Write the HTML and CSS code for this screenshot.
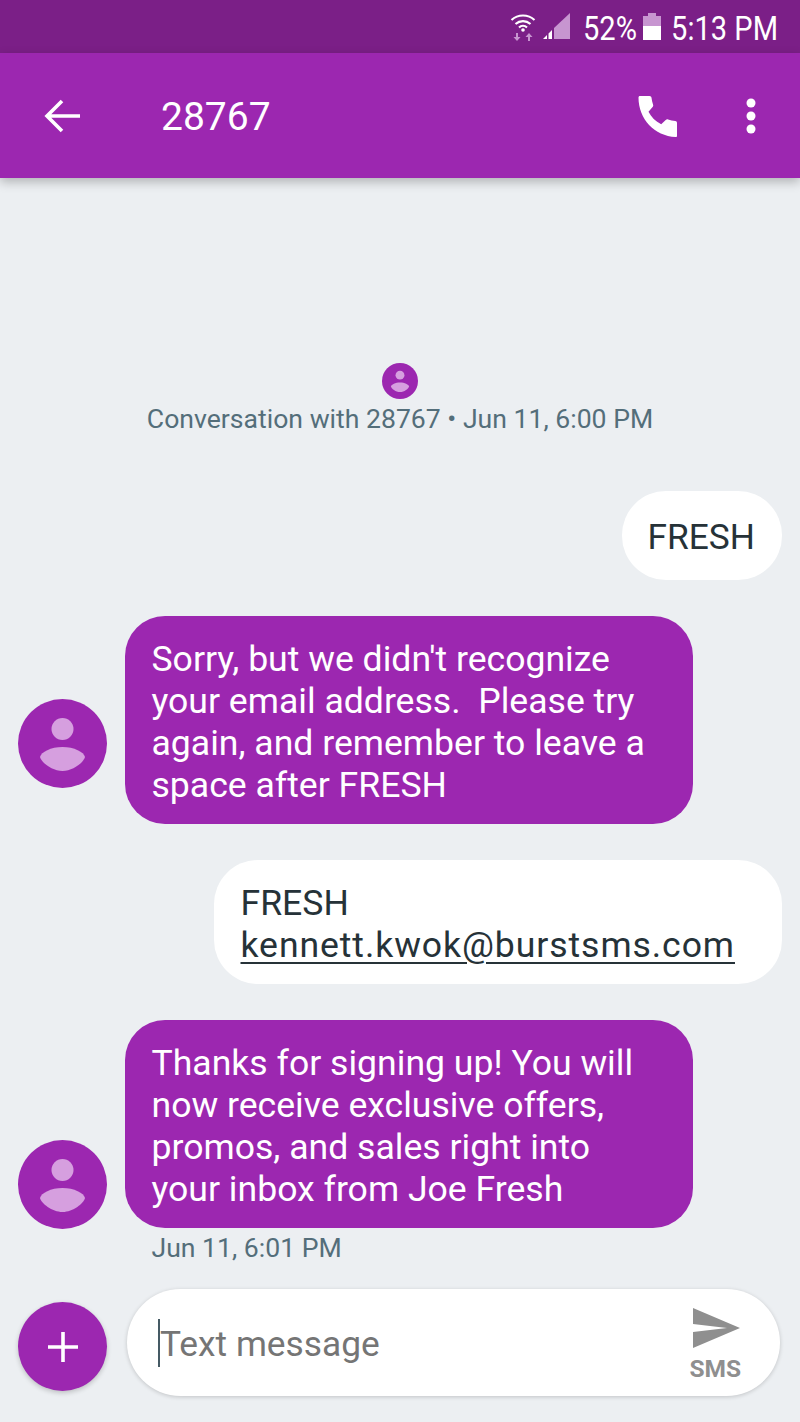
FILE: index.html
```html
<!DOCTYPE html>
<html lang="en">
<head>
    <meta charset="UTF-8">
    <meta name="viewport" content="width=device-width, initial-scale=1.0">
    <title>28767</title>
    <link rel="stylesheet" href="styles.css">
</head>
<body>

    <!-- Status bar -->
    <div class="status-bar">
        <svg class="wifi-icon" width="26" height="28" viewBox="0 0 26 28">
            <path d="M1.5 7 A17 17 0 0 1 24.5 7" fill="none" stroke="#fff" stroke-width="2.2"/>
            <path d="M5.5 11 A11.500 11.500 0 0 1 20.500 11" fill="none" stroke="#fff" stroke-width="2.2"/>
            <path d="M9 14.500 A6 6 0 0 1 17 14.500" fill="none" stroke="#fff" stroke-width="2.200"/>
            <circle cx="13" cy="17" r="1.800" fill="#fff"/>
            <path d="M8 20v4h2.500l-3.500 4-3.500-4H6v-4zM18 28v-4h-2.500l3.500-4 3.500 4H20v4z" fill="#c795d0"/>
        </svg>
        <svg class="signal-icon" width="28" height="28" viewBox="0 0 28 28">
            <path d="M27 0v26H11V15z" fill="#c795d0"/>
            <path d="M0 26l4-4v4zM5.500 20.500L9 17v9H5.500z" fill="#fff"/>
        </svg>
        <span class="status-text battery-text">52%</span>
        <svg class="battery-icon" width="18" height="27" viewBox="0 0 18 27">
            <path d="M5 0h8v3h5v12H0V3h5z" fill="#c795d0"/>
            <path d="M0 13h18v14H0z" fill="#fff"/>
        </svg>
        <span class="status-text clock">5:13 PM</span>
    </div>

    <!-- App bar -->
    <header class="app-bar">
        <svg class="back-icon" width="38" height="34" viewBox="0 0 38 34">
            <path d="M19 2L4 17l15 15M4 17h33" fill="none" stroke="#fff" stroke-width="3.600"/>
        </svg>
        <h1 class="title">28767</h1>
        <svg class="call-icon" width="42" height="42" viewBox="0 0 42 42">
            <path d="M3 1h9.500c1.200 0 1.800.8 2 1.800.3 2.500.8 4.800 1.600 7 .3.900.1 1.700-.5 2.300l-4.100 4.600c2.800 5.400 6.900 9.500 12.700 12.500l4.500-4.300c.7-.6 1.500-.8 2.400-.5 2.200.8 4.700 1.300 7.200 1.500 1 .1 1.700.8 1.700 2V41c0 .6-.5 1-1.200 1C17.500 41 1.500 24 1.500 2.500 1.500 1.600 2 1 3 1z" fill="#fff"/>
        </svg>
        <svg class="menu-icon" width="10" height="36" viewBox="0 0 10 36">
            <circle cx="5" cy="5" r="4.500" fill="#fff"/>
            <circle cx="5" cy="18" r="4.500" fill="#fff"/>
            <circle cx="5" cy="31" r="4.500" fill="#fff"/>
        </svg>
    </header>

    <main class="conversation">

        <!-- Conversation start -->
        <div class="convo-start">
            <svg class="avatar-small" width="36" height="36" viewBox="0 0 89 89">
                <circle cx="44.500" cy="44.500" r="44.500" fill="#9c27b0"/>
                <circle cx="44.500" cy="30" r="11" fill="#d69fdf"/>
                <path d="M22 58C23 53 33 48 44.500 48S66 53 67 58C66 63 55 72 44.500 72S23 63 22 58z" fill="#d69fdf"/>
            </svg>
            <p class="convo-label">Conversation with 28767 • Jun 11, 6:00 PM</p>
        </div>

        <div class="row row-out">
            <div class="bubble bubble-out bubble-single">FRESH</div>
        </div>

        <div class="row row-in">
            <svg class="avatar avatar-first" width="89" height="89" viewBox="0 0 89 89">
                <circle cx="44.500" cy="44.500" r="44.500" fill="#9c27b0"/>
                <circle cx="44.500" cy="30" r="11" fill="#d69fdf"/>
                <path d="M22 58C23 53 33 48 44.500 48S66 53 67 58C66 63 55 72 44.500 72S23 63 22 58z" fill="#d69fdf"/>
            </svg>
            <div class="message-col">
                <div class="bubble bubble-in">Sorry, but we didn't recognize your email address.&nbsp; Please try again, and remember to leave a space after FRESH</div>
            </div>
        </div>

        <div class="row row-out">
            <div class="bubble bubble-out bubble-wide">FRESH<br><span class="email">kennett.kwok@burstsms.com</span></div>
        </div>

        <div class="row row-in">
            <svg class="avatar avatar-last" width="89" height="89" viewBox="0 0 89 89">
                <circle cx="44.500" cy="44.500" r="44.500" fill="#9c27b0"/>
                <circle cx="44.500" cy="30" r="11" fill="#d69fdf"/>
                <path d="M22 58C23 53 33 48 44.500 48S66 53 67 58C66 63 55 72 44.500 72S23 63 22 58z" fill="#d69fdf"/>
            </svg>
            <div class="message-col">
                <div class="bubble bubble-in">Thanks for signing up! You will now receive exclusive offers, promos, and sales right into your inbox from Joe Fresh</div>
                <div class="timestamp">Jun 11, 6:01 PM</div>
            </div>
        </div>
    </main>

    <!-- Compose bar -->
    <footer class="composer">
        <button class="add-btn" type="button">
            <svg width="32" height="32" viewBox="0 0 32 32">
                <path d="M16 1v30M1 16h30" fill="none" stroke="#fff" stroke-width="3.600"/>
            </svg>
        </button>
        <div class="input-box">
            <span class="caret"></span>
            <span class="placeholder">Text message</span>
            <div class="send">
                <svg class="send-icon" width="48" height="40" viewBox="0 0 48 40">
                    <path d="M1 0l47 20L1 40V24l34-4L1 16z" fill="#8f8f8f"/>
                </svg>
                <span class="send-label">SMS</span>
            </div>
        </div>
    </footer>

</body>
</html>
```

FILE: styles.css
```css
body {
    margin: 0;
    width: 800px;
    height: 1422px;
    overflow: hidden;
    background-color: #eceff2;
    font-family: 'Roboto', sans-serif;
    display: flex;
    flex-direction: column;
}

/* Status bar */
.status-bar {
    flex: none;
    height: 53px;
    background-color: #7b1f87;
    display: flex;
    align-items: center;
    justify-content: flex-end;
    padding-right: 22px;
    box-sizing: border-box;
    color: white;
}

.status-text {
    font-size: 33px;
    margin-top: 3px;
    transform: scaleX(0.88);
}

.wifi-icon {
    margin-right: 7px;
}

.signal-icon {
    margin-right: 12px;
}

.battery-text {
    transform-origin: left center;
    width: 52px;
}

.battery-icon {
    margin-left: 8px;
    margin-right: 10px;
}

.clock {
    transform-origin: right center;
    width: 107px;
    white-space: nowrap;
    display: flex;
    justify-content: flex-end;
}

/* App bar */
.app-bar {
    flex: none;
    height: 125px;
    background-color: #9c27b0;
    display: flex;
    align-items: center;
    box-shadow: 0 4px 10px rgba(0, 0, 0, 0.25);
    position: relative;
    color: white;
}

.back-icon {
    margin-left: 43px;
}

.title {
    font-size: 39px;
    font-weight: 400;
    margin: 2px 0 0 80px;
    flex: 1;
}

.call-icon {
    margin-right: 67px;
}

.menu-icon {
    margin-right: 44px;
}

/* Messages */
.conversation {
    flex: 1;
    display: flex;
    flex-direction: column;
    padding: 0 18px;
}

.convo-start {
    display: flex;
    flex-direction: column;
    align-items: center;
    margin-top: 185px;
    margin-bottom: 56px;
}

.avatar-small {
    display: block;
}

.convo-label {
    margin: 3px 0 0;
    font-size: 26.6px;
    line-height: 33px;
    color: #546e7a;
}

.row {
    display: flex;
    margin-bottom: 36px;
}

.row:last-child {
    margin-bottom: 0;
}

.row-out {
    justify-content: flex-end;
}

.row-in {
    gap: 18px;
    align-items: flex-start;
}

.avatar {
    flex: none;
}

.avatar-first {
    margin-top: 83px;
}

.avatar-last {
    margin-top: 120px;
}

.bubble {
    font-size: 35.6px;
    line-height: 42px;
    padding: 22px 27px 18px;
    box-sizing: border-box;
}

.bubble-in {
    width: 568px;
    padding-left: 26.5px;
    background-color: #9c27b0;
    color: white;
    border-radius: 40px;
}

.bubble-out {
    background-color: white;
    color: #263238;
    border-radius: 44px;
}

.bubble-single {
    font-size: 35.3px;
    padding-top: 25px;
    padding-bottom: 22px;
    padding-left: 26px;
}

.bubble-wide {
    width: 568px;
    padding-left: 26.5px;
}

.email {
    letter-spacing: 0.92px;
    text-decoration: underline;
    text-decoration-thickness: 2px;
    text-underline-offset: 5px;
}

.timestamp {
    margin: 3px 0 0 26.5px;
    font-size: 26.6px;
    line-height: 34px;
    color: #546e7a;
}

/* Compose bar */
.composer {
    flex: none;
    position: relative;
    height: 133px;
    padding: 0 20px 26px 18px;
    box-sizing: border-box;
    display: flex;
    align-items: center;
    gap: 20px;
}

.add-btn {
    width: 89px;
    height: 89px;
    margin-top: 8px;
    padding: 0;
    border: none;
    border-radius: 50%;
    background-color: #9c27b0;
    box-shadow: 0 2px 5px rgba(0, 0, 0, 0.2);
    display: flex;
    align-items: center;
    justify-content: center;
}

.input-box {
    flex: 1;
    height: 107px;
    background-color: white;
    border-radius: 54px;
    box-shadow: 0 1px 4px rgba(0, 0, 0, 0.18);
    display: flex;
    align-items: center;
    padding-left: 31px;
    padding-right: 39px;
}

.caret {
    width: 2px;
    height: 48px;
    background-color: #455a64;
}

.placeholder {
    font-size: 35.3px;
    color: #757575;
    flex: 1;
    padding-top: 2px;
}

.send {
    display: flex;
    flex-direction: column;
    align-items: center;
    padding-top: 6px;
}

.send-icon {
    margin-left: 2px;
}

.send-label {
    font-size: 24.500px;
    font-weight: 700;
    color: #8f8f8f;
    margin-top: 6px;
}
```
